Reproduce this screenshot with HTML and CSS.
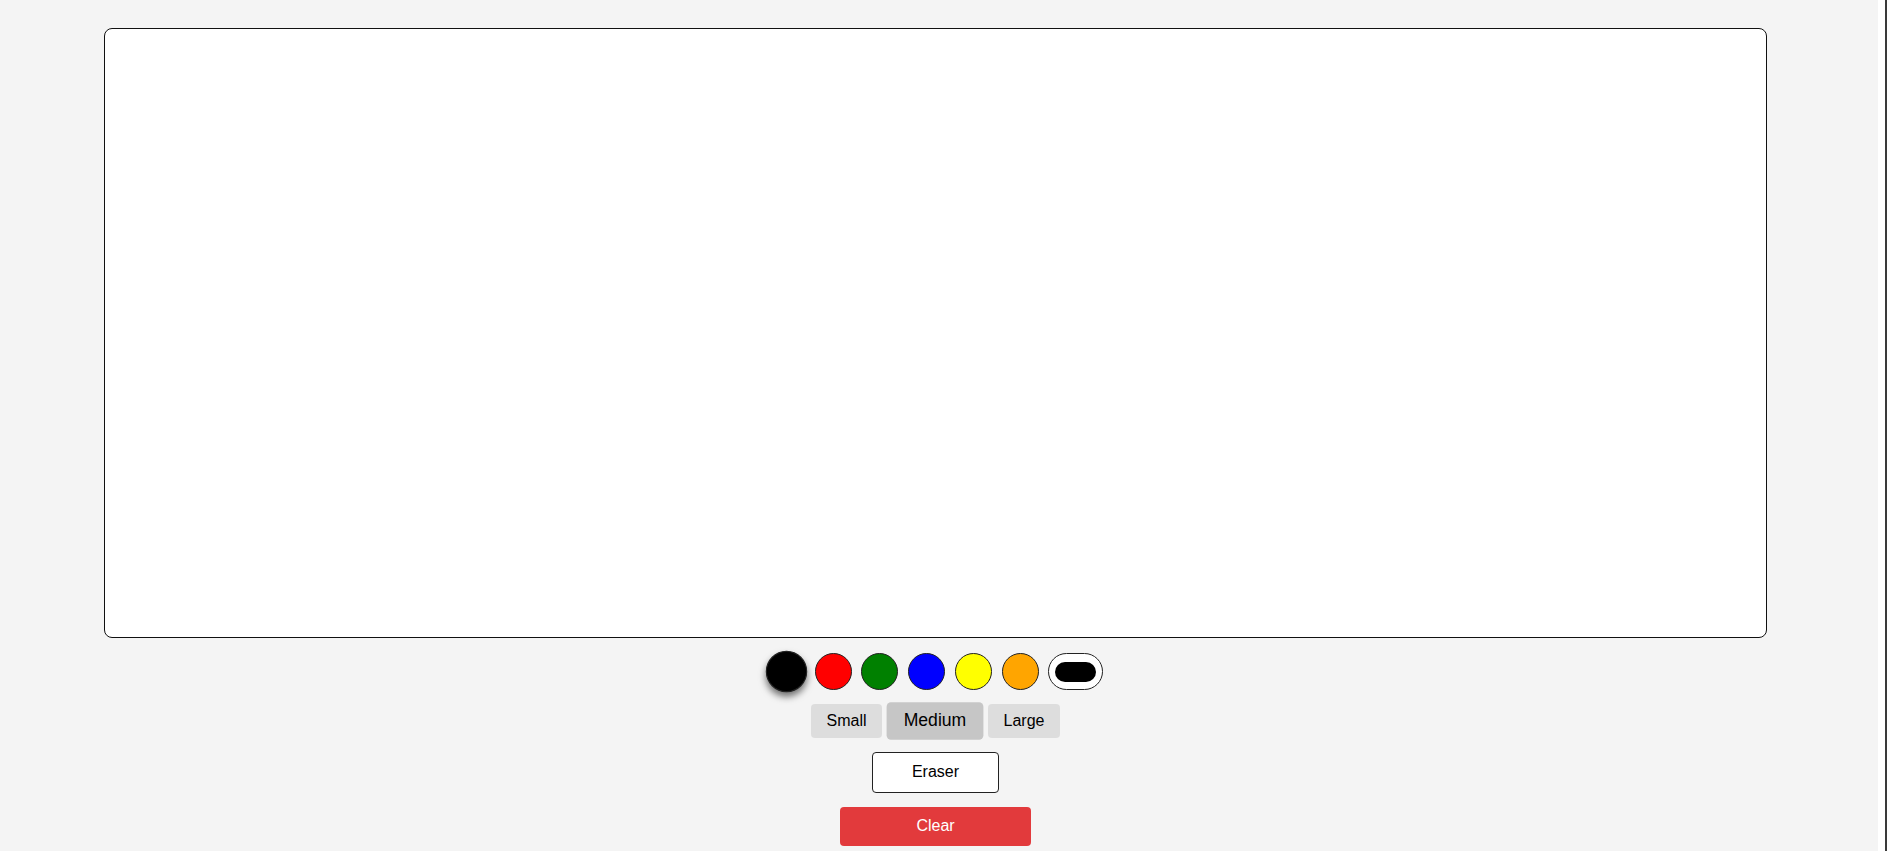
FILE: index.html
```html
<!DOCTYPE html>
<html lang="en">
<head>
<meta charset="utf-8">
<title>Drawing Board</title>
<link rel="stylesheet" href="styles.css">
</head>
<body>
<div class="page">
  <div class="board"></div>
  <div class="colors">
    <button class="swatch swatch-black is-active" aria-label="Black"></button>
    <button class="swatch swatch-red" aria-label="Red"></button>
    <button class="swatch swatch-green" aria-label="Green"></button>
    <button class="swatch swatch-blue" aria-label="Blue"></button>
    <button class="swatch swatch-yellow" aria-label="Yellow"></button>
    <button class="swatch swatch-orange" aria-label="Orange"></button>
    <button class="brush" aria-label="Brush"><span class="brush-tip"></span></button>
  </div>
  <div class="sizes">
    <button class="size">Small</button>
    <button class="size is-active">Medium</button>
    <button class="size">Large</button>
  </div>
  <button class="eraser">Eraser</button>
  <button class="clear">Clear</button>
</div>
<div class="edge"></div>
</body>
</html>
```

FILE: styles.css
```css
html, body {
  margin: 0;
  padding: 0;
  background: #f4f4f4;
  font-family: "Liberation Sans", Arial, sans-serif;
  overflow: hidden;
}

.page {
  width: 1871px;
  padding-top: 28px;
  display: flex;
  flex-direction: column;
  align-items: center;
}

.board {
  width: 1663px;
  height: 610px;
  box-sizing: border-box;
  background: #fff;
  border: 1px solid #111;
  border-radius: 8px;
}

.colors {
  margin-top: 15px;
  display: flex;
  align-items: center;
  gap: 9.75px;
}

.swatch {
  width: 37px;
  height: 37px;
  box-sizing: border-box;
  padding: 0;
  border: 1px solid #222;
  border-radius: 50%;
  cursor: pointer;
}

.swatch.is-active {
  transform: scale(1.12);
  box-shadow: 0 4px 7px rgba(0, 0, 0, 0.55);
}

.swatch-black { background: #000; }
.swatch-red { background: #ff0000; }
.swatch-green { background: #008000; }
.swatch-blue { background: #0000ff; }
.swatch-yellow { background: #ffff00; }
.swatch-orange { background: #ffa500; }

.brush {
  width: 55px;
  height: 37px;
  box-sizing: border-box;
  padding: 0;
  border: 1px solid #222;
  border-radius: 19px;
  background: #fff;
  display: flex;
  align-items: center;
  justify-content: center;
}

.brush-tip {
  width: 41px;
  height: 20px;
  border-radius: 10px;
  background: #000;
}

.sizes {
  margin-top: 14px;
  display: flex;
  gap: 9px;
}

.size {
  font-family: inherit;
  font-size: 16px;
  line-height: 18.4px;
  padding: 8px 15.5px;
  border: 0;
  border-radius: 4px;
  background: #dddddd;
  color: #000;
}

.size.is-active {
  background: #c6c6c6;
  transform: scale(1.1);
}

.eraser {
  margin-top: 14px;
  width: 127px;
  font-family: inherit;
  font-size: 16px;
  line-height: 18.4px;
  padding: 10px 0;
  border: 1px solid #222;
  border-radius: 4px;
  background: #fff;
  color: #000;
}

.clear {
  margin-top: 14.5px;
  width: 191px;
  font-family: inherit;
  font-size: 16px;
  line-height: 18.4px;
  padding: 10px 0;
  border: 0;
  border-radius: 4px;
  background: #e23a3c;
  color: #fff;
}

.edge {
  position: fixed;
  top: 0;
  right: 0;
  width: 9px;
  height: 100%;
  box-sizing: border-box;
  background: #fff;
  border-right: 2px solid #3a3a3a;
}
```
